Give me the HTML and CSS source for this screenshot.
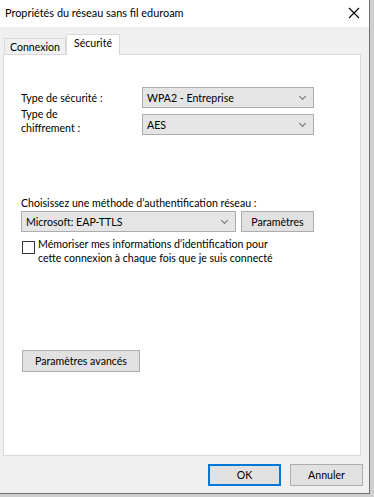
FILE: index.html
```html
<!doctype html>
<html>
<head>
<meta charset="utf-8">
<title>Propriétés du réseau sans fil eduroam</title>
<link rel="stylesheet" href="styles.css">
</head>
<body>
<div class="win">
    <div class="titlebar">
        <span class="title">Propriétés du réseau sans fil eduroam</span>
        <svg class="close" width="12" height="12" viewBox="0 0 12 12"><path d="M1 1L11 11M11 1L1 11" stroke="#000" stroke-width="1.1"/></svg>
    </div>
    <div class="content">
        <div class="tabs">
            <div class="tab">Connexion</div>
            <div class="tab on">Sécurité</div>
        </div>
        <div class="panel">
            <div class="row first">
                <label class="lbl">Type de sécurité :</label>
                <div class="select wide"><span>WPA2 - Entreprise</span><i class="chev"></i></div>
            </div>
            <div class="row second">
                <label class="lbl two">Type de<br>chiffrement :</label>
                <div class="select wide"><span>AES</span><i class="chev"></i></div>
            </div>
            <p class="auth">Choisissez une méthode d’authentification réseau :</p>
            <div class="row method">
                <div class="select meth"><span>Microsoft: EAP-TTLS</span><i class="chev"></i></div>
                <div class="btn param">Paramètres</div>
            </div>
            <div class="check">
                <span class="box"></span>
                <span class="ctext">Mémoriser mes informations d’identification pour<br>cette connexion à chaque fois que je suis connecté</span>
            </div>
            <div class="btn adv">Paramètres avancés</div>
        </div>
        <div class="footer">
            <div class="btn ok">OK</div>
            <div class="btn">Annuler</div>
        </div>
    </div>
</div>
</body>
</html>
```
FILE: styles.css
```css
* { margin: 0; padding: 0; box-sizing: border-box; }
body { background: #cfcfcf; font: 10.6px Lato, "Liberation Sans", Arial, sans-serif; color: #000; width: 374px; height: 497px; overflow: hidden; }
.win { width: 370px; height: 494px; background: #f0f0f0; border-right: 1px solid #707070; border-bottom: 1px solid #707070; display: flex; flex-direction: column; }
.titlebar { height: 27px; background: #fff; display: flex; align-items: center; justify-content: space-between; padding: 0 9px 2px 5px; }
.title { font-size: 10.9px; }
.close { display: block; }
.content { flex: 1; display: flex; flex-direction: column; padding: 7px 8px 0 3px; }
.tabs { height: 20px; display: flex; align-items: flex-end; padding-left: 1px; position: relative; z-index: 1; }
.tab { height: 16px; width: 62px; text-align: center; border: 1px solid #d9d9d9; border-bottom: none; background: #f0f0f0; line-height: 16px; }
.tab.on { height: 21px; width: 54px; margin-bottom: -1px; background: #fff; line-height: 16px; }
.panel { height: 402px; background: #fff; border: 1px solid #d9d9d9; padding: 32px 0 0 17px; display: flex; flex-direction: column; }
.row { display: flex; align-items: center; }
.lbl { width: 121px; line-height: 14px; }
.second { margin-top: -1px; align-items: flex-end; }
.second .lbl { height: 28px; }
.select { height: 21px; background: #e5e5e5; border: 1px solid #adadad; display: flex; align-items: center; justify-content: space-between; padding: 0 8px 0 4px; }
.wide { width: 172px; }
.meth { width: 215px; margin-right: 5px; }
.chev { width: 5px; height: 5px; border-right: 1px solid #707070; border-bottom: 1px solid #707070; transform: rotate(45deg); margin-top: -3px; }
.auth { margin-top: 61px; line-height: 14px; height: 14px; }
.method { margin-top: 1px; }
.btn { height: 21px; background: #e1e1e1; border: 1px solid #adadad; display: flex; align-items: center; justify-content: center; }
.param { width: 73px; }
.check { display: flex; align-items: flex-start; margin-top: 5px; padding-left: 1px; }
.box { width: 13px; height: 13px; border: 1px solid #333; background: #fff; margin-right: 3px; margin-top: 4px; flex: none; }
.ctext { line-height: 14px; }
.adv { width: 118px; height: 22px; margin-top: 85px; margin-left: 1px; }
.footer { flex: 1; display: flex; justify-content: flex-end; align-items: flex-start; padding: 8px 0 0; gap: 9px; margin-right: -2px; }
.footer .btn { width: 73px; height: 22px; }
.footer .ok { border: 2px solid #0078d7; }
```
